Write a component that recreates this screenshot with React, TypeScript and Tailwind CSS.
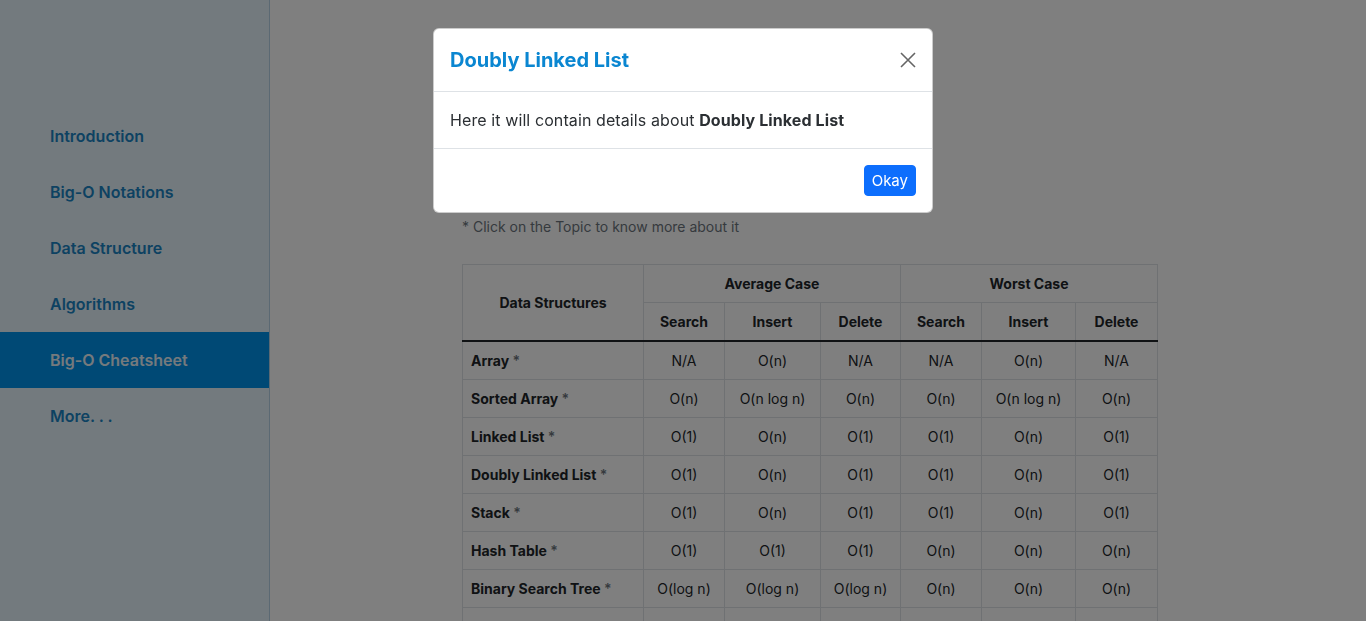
import React from 'react'

type Row = { name: string; cells: string[] }

const NAV = ['Introduction', 'Big-O Notations', 'Data Structure', 'Algorithms', 'Big-O Cheatsheet', 'More. . .']

const ROWS: Row[] = [
  { name: 'Array', cells: ['N/A', 'O(n)', 'N/A', 'N/A', 'O(n)', 'N/A'] },
  { name: 'Sorted Array', cells: ['O(n)', 'O(n log n)', 'O(n)', 'O(n)', 'O(n log n)', 'O(n)'] },
  { name: 'Linked List', cells: ['O(1)', 'O(n)', 'O(1)', 'O(1)', 'O(n)', 'O(1)'] },
  { name: 'Doubly Linked List', cells: ['O(1)', 'O(n)', 'O(1)', 'O(1)', 'O(n)', 'O(1)'] },
  { name: 'Stack', cells: ['O(1)', 'O(n)', 'O(1)', 'O(1)', 'O(n)', 'O(1)'] },
  { name: 'Hash Table', cells: ['O(1)', 'O(1)', 'O(1)', 'O(n)', 'O(n)', 'O(n)'] },
  { name: 'Binary Search Tree', cells: ['O(log n)', 'O(log n)', 'O(log n)', 'O(n)', 'O(n)', 'O(n)'] },
  { name: 'Red-Black Tree', cells: ['O(log n)', 'O(log n)', 'O(log n)', 'O(log n)', 'O(log n)', 'O(log n)'] },
]

const COLS = ['w-[181px]', 'w-[81px]', 'w-[96px]', 'w-[80px]', 'w-[81px]', 'w-[94px]', 'w-[82px]']

function Sidebar() {
  return (
    <aside className="w-[270px] shrink-0 min-h-screen bg-[#e6f5fd] border-r border-[#b7d3e6] pt-[108px]">
      {NAV.map(n => (
        <div key={n}
          className={`h-[56px] flex items-center pl-[50px] text-[16px] font-semibold ${n === 'Big-O Cheatsheet' ? 'bg-[#0092ea] text-[#eaf4fa]' : 'text-[#1b84c4]'}`}>
          {n}
        </div>
      ))}
    </aside>
  )
}

function Cheatsheet() {
  const th = 'border border-[#dee2e6] px-2 py-2 text-[14px] leading-[21px] font-bold text-center'
  const td = 'border border-[#dee2e6] px-2 py-2 text-[14px] leading-[21px] whitespace-nowrap'
  return (
    <main className="flex-1 pt-[216px] pl-[192px]">
      <p className="text-[14px] leading-[21px] text-[#6c757d] mb-[27px]">* Click on the Topic to know more about it</p>
      <table className="border-collapse text-[#212529] table-fixed w-[694px]">
        <colgroup>
          {COLS.map((c, i) => <col key={i} className={c} />)}
        </colgroup>
        <thead className="border-b-2 border-b-[#212529]">
          <tr>
            <th rowSpan={2} className={th}>Data Structures</th>
            <th colSpan={3} className={th}>Average Case</th>
            <th colSpan={3} className={th}>Worst Case</th>
          </tr>
          <tr>
            {['Search', 'Insert', 'Delete', 'Search', 'Insert', 'Delete'].map((h, i) => (
              <th key={i} className={th}>{h}</th>
            ))}
          </tr>
        </thead>
        <tbody>
          {ROWS.map((r, ri) => {
            const top = ri === 0 ? ' border-t-2 border-t-[#212529]' : ''
            return (
              <tr key={r.name}>
                <td className={td + ' font-bold' + top}>
                  {r.name} <span className="text-[#6c757d] font-semibold">*</span>
                </td>
                {r.cells.map((c, i) => (
                  <td key={i} className={td + ' text-center' + top}>{c}</td>
                ))}
              </tr>
            )
          })}
        </tbody>
      </table>
    </main>
  )
}

function Modal() {
  return (
    <div className="fixed inset-0 bg-black/50 z-50">
      <div className="w-[500px] mx-auto mt-[28px] bg-white border border-black/20 rounded-[6px] text-[#2b2f33]">
        <div className="flex items-center justify-between p-4 border-b border-[#dee2e6]">
          <h5 className="text-[20px] leading-[30px] font-bold text-[#0a86d1]">Doubly Linked List</h5>
          <button className="w-4 h-4 opacity-60">
            <svg viewBox="0 0 16 16" className="w-4 h-4" fill="none" stroke="#000" strokeWidth="1.6">
              <path d="M1 1 15 15M15 1 1 15" />
            </svg>
          </button>
        </div>
        <div className="p-4 text-[16px] leading-[24px] tracking-[0.1px]">
          Here it will contain details about <b>Doubly Linked List</b>
        </div>
        <div className="flex justify-end px-3 py-3 border-t border-[#dee2e6]">
          <button className="m-1 px-[7px] py-[3px] text-[15px] leading-[23px] text-white bg-[#0d6efd] border border-[#0d6efd] rounded-[4px]">Okay</button>
        </div>
      </div>
    </div>
  )
}

export default function App() {
  return (
    <div className="flex min-h-screen bg-white overflow-hidden" style={{ fontFamily: 'Inter, "Noto Sans", sans-serif' }}>
      <Sidebar />
      <Cheatsheet />
      <Modal />
    </div>
  )
}
